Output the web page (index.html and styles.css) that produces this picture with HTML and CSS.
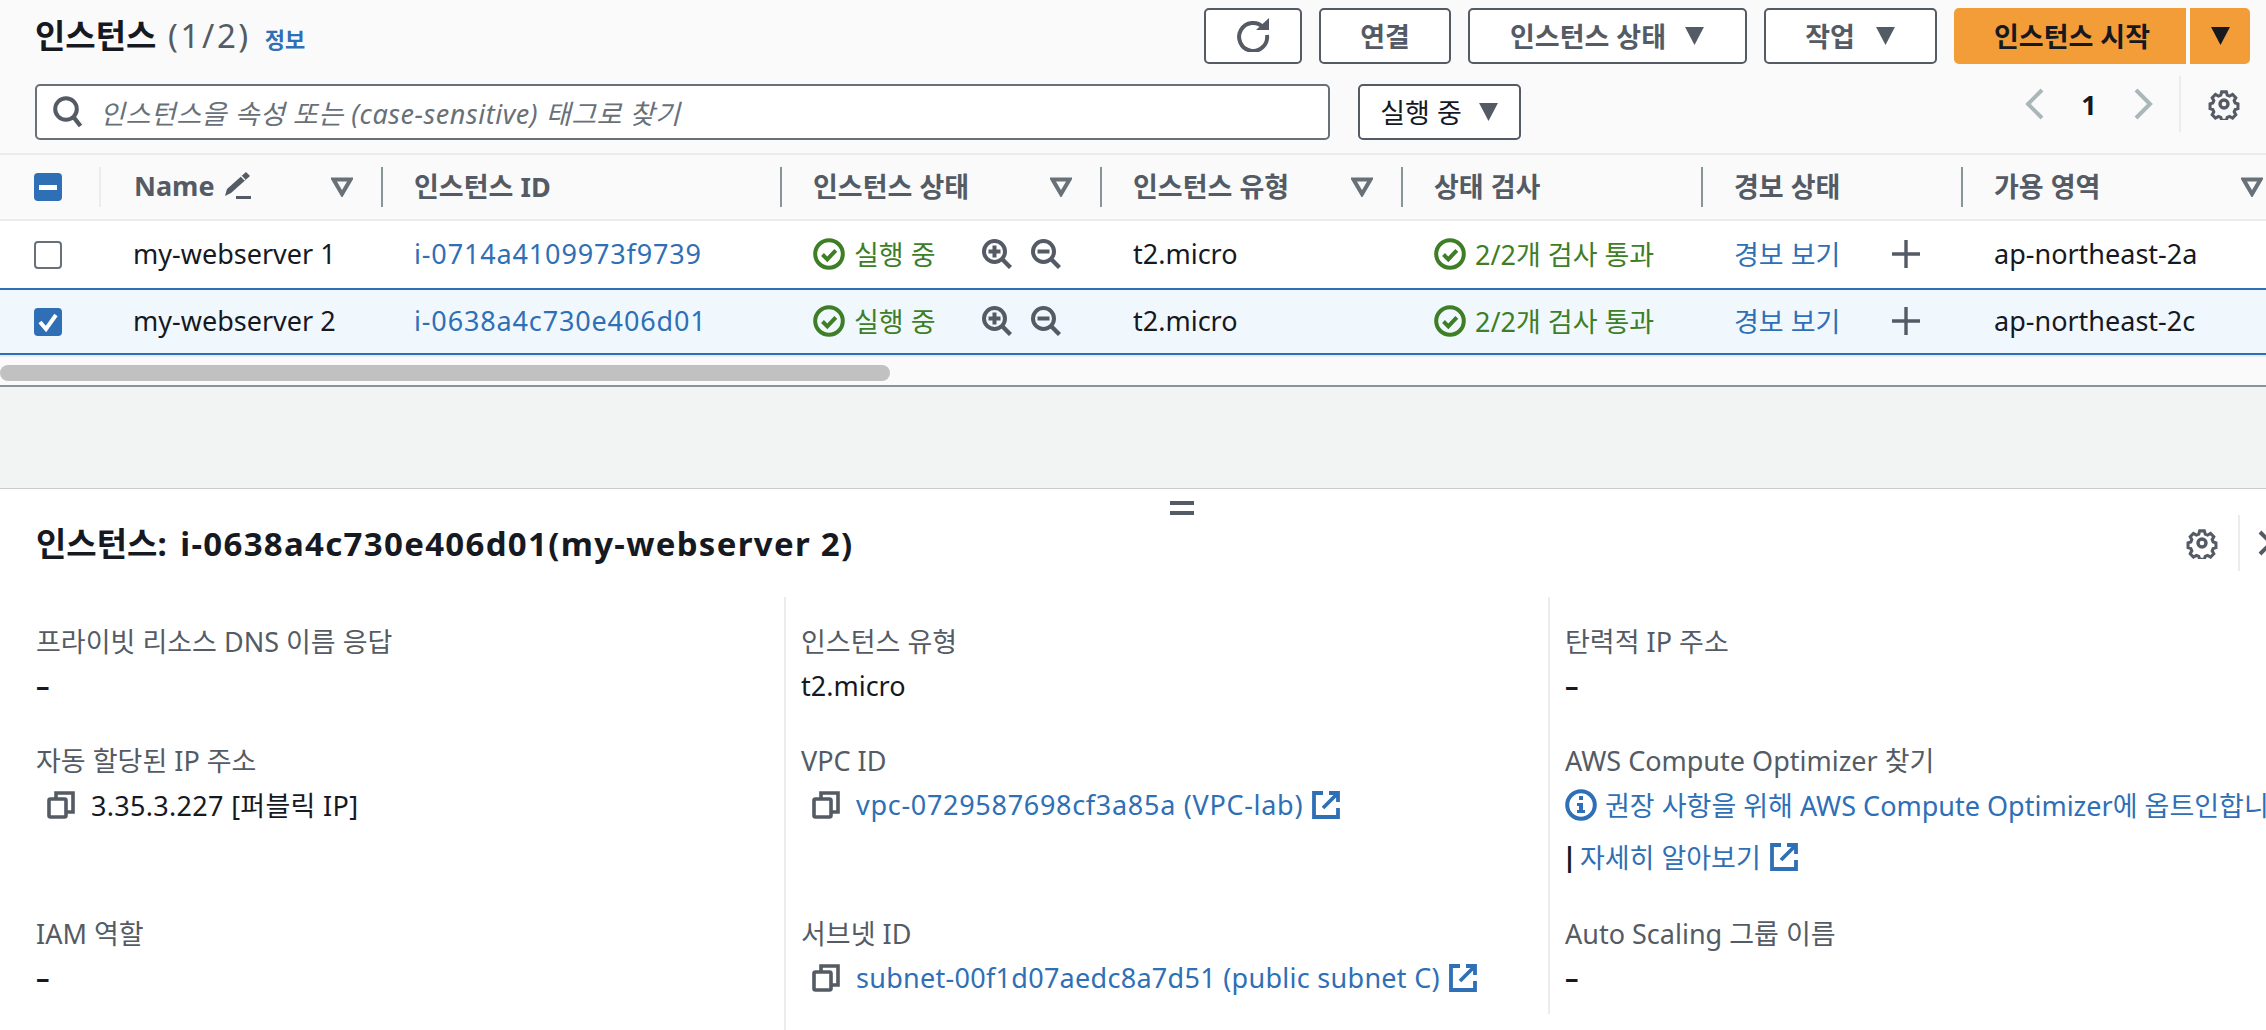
FILE: index.html
```html
<!DOCTYPE html>
<html lang="ko">
<head>
    <meta charset="UTF-8">
    <title>인스턴스</title>
    <link rel="stylesheet" href="styles.css">
</head>
<body>
    <svg class="defs">
        <defs>
            <symbol id="i-caret" viewBox="0 0 20 20"><path d="M1 2h18l-9 17z" fill="currentColor"/></symbol>
            <symbol id="i-filter" viewBox="0 0 22 20"><path d="M2.5 2.5h17L11 17z" fill="none" stroke="currentColor" stroke-width="4" stroke-linejoin="miter"/></symbol>
            <symbol id="i-gear" viewBox="0 0 32 32"><g fill="none" stroke="currentColor" stroke-width="3.4"><circle cx="16" cy="16" r="4"/><path d="M13.4 2.5h5.2l1 3.6 2.6 1.1 3.3-1.8 3.6 3.6-1.8 3.3 1.1 2.6 3.1 1v5.2l-3.1 1-1.1 2.6 1.8 3.3-3.6 3.6-3.3-1.8-2.6 1.1-1 3.1h-5.2l-1-3.1-2.6-1.1-3.3 1.8-3.6-3.6 1.8-3.3-1.1-2.6-3.1-1v-5.2l3.1-1 1.1-2.6-1.8-3.3 3.6-3.6 3.3 1.8 2.6-1.1z" transform="translate(1.6 1.6) scale(.9)"/></g></symbol>
            <symbol id="i-ok" viewBox="0 0 32 32"><circle cx="16" cy="16" r="13.8" fill="none" stroke="currentColor" stroke-width="4"/><path d="M9.5 16.5l4.8 4.8 8.5-9" fill="none" stroke="currentColor" stroke-width="4"/></symbol>
            <symbol id="i-zoom-in" viewBox="0 0 30 30"><circle cx="12.5" cy="12.5" r="10.5" fill="none" stroke="currentColor" stroke-width="4"/><path d="M20 20l8.5 8.5" stroke="currentColor" stroke-width="4.4"/><path d="M12.5 6.5v12M6.5 12.5h12" stroke="currentColor" stroke-width="4"/></symbol>
            <symbol id="i-zoom-out" viewBox="0 0 30 30"><circle cx="12.5" cy="12.5" r="10.5" fill="none" stroke="currentColor" stroke-width="4"/><path d="M20 20l8.5 8.5" stroke="currentColor" stroke-width="4.4"/><path d="M6.5 12.5h12" stroke="currentColor" stroke-width="4"/></symbol>
            <symbol id="i-plus" viewBox="0 0 28 28"><path d="M14 0v28M0 14h28" stroke="currentColor" stroke-width="3.4"/></symbol>
            <symbol id="i-copy" viewBox="0 0 28 28"><path d="M9 7V2h17v19h-6" fill="none" stroke="currentColor" stroke-width="3.6"/><rect x="2" y="8" width="17" height="18" rx="1.5" fill="none" stroke="currentColor" stroke-width="3.6"/></symbol>
            <symbol id="i-ext" viewBox="0 0 28 28"><path d="M11 2H2v24h24v-9" fill="none" stroke="currentColor" stroke-width="3.8"/><path d="M17 2h9v9M25 3L11 17" fill="none" stroke="currentColor" stroke-width="3.8"/></symbol>
        </defs>
    </svg>

    <section class="top-panel">
        <div class="toolbar">
            <div class="title-group">
                <h1 class="title">인스턴스 <span class="count">(1/2)</span></h1>
                <a class="info-link">정보</a>
            </div>
            <div class="actions">
                <button class="btn btn-icon">
                    <svg class="refresh" viewBox="0 0 34 34"><path d="M27.5 9.5A14 14 0 1 0 31 17" fill="none" stroke="currentColor" stroke-width="4"/><path d="M20 12h13V0z" fill="currentColor"/></svg>
                </button>
                <button class="btn btn-connect">연결</button>
                <button class="btn btn-state">인스턴스 상태 <svg class="caret"><use href="#i-caret"/></svg></button>
                <button class="btn btn-action">작업 <svg class="caret"><use href="#i-caret"/></svg></button>
                <div class="split">
                    <button class="btn-primary">인스턴스 시작</button>
                    <button class="btn-primary-caret"><svg class="caret"><use href="#i-caret"/></svg></button>
                </div>
            </div>
        </div>

        <div class="filter-row">
            <div class="search">
                <svg class="search-icon" viewBox="0 0 30 32"><circle cx="13" cy="13" r="10.8" fill="none" stroke="currentColor" stroke-width="4"/><path d="M20.5 21l7 9" stroke="currentColor" stroke-width="4.4"/></svg>
                <span class="placeholder">인스턴스을 속성 또는 (case-sensitive) 태그로 찾기</span>
            </div>
            <button class="btn btn-filter">실행 중 <svg class="caret"><use href="#i-caret"/></svg></button>
            <div class="pager">
                <svg class="chev" viewBox="0 0 20 32"><path d="M17 2L3 16l14 14" fill="none" stroke="currentColor" stroke-width="4"/></svg>
                <span class="page-num">1</span>
                <svg class="chev" viewBox="0 0 20 32"><path d="M3 2l14 14L3 30" fill="none" stroke="currentColor" stroke-width="4"/></svg>
                <span class="pager-gear"><svg class="gear"><use href="#i-gear"/></svg></span>
            </div>
        </div>

        <div class="tbl">
            <div class="tr th-row">
                <div class="cell-check"><span class="check check-mixed"><span class="dash"></span></span></div>
                <div class="th th-first"><span class="th-label">Name<svg class="pencil" viewBox="0 0 28 28"><path d="M23 1l4 4L8 22l-6 3 2-7z" fill="currentColor"/><path d="M13 25h15v3H13z" fill="currentColor"/><path d="M18 5l4 4" stroke="#fafafa" stroke-width="1.5"/></svg></span><svg class="sort"><use href="#i-filter"/></svg></div>
                <div class="th"><span class="th-label">인스턴스 ID</span></div>
                <div class="th"><span class="th-label">인스턴스 상태</span><svg class="sort"><use href="#i-filter"/></svg></div>
                <div class="th"><span class="th-label">인스턴스 유형</span><svg class="sort"><use href="#i-filter"/></svg></div>
                <div class="th"><span class="th-label">상태 검사</span></div>
                <div class="th"><span class="th-label">경보 상태</span></div>
                <div class="th"><span class="th-label">가용 영역</span><svg class="sort"><use href="#i-filter"/></svg></div>
            </div>

            <div class="tr row row-one">
                <div class="cell-check"><span class="check"></span></div>
                <div class="td">my-webserver 1</div>
                <div class="td"><a class="link rid">i-0714a4109973f9739</a></div>
                <div class="td status"><svg class="ok"><use href="#i-ok"/></svg>실행 중<svg class="zoom zoom-first"><use href="#i-zoom-in"/></svg><svg class="zoom"><use href="#i-zoom-out"/></svg></div>
                <div class="td">t2.micro</div>
                <div class="td status"><svg class="ok"><use href="#i-ok"/></svg>2/2개 검사 통과</div>
                <div class="td"><a class="link">경보 보기</a><svg class="plus"><use href="#i-plus"/></svg></div>
                <div class="td">ap-northeast-2a</div>
            </div>

            <div class="tr row row-selected">
                <div class="cell-check"><span class="check check-on"><svg viewBox="0 0 28 28"><path d="M6 14l6 7 10-14" fill="none" stroke="#fff" stroke-width="4"/></svg></span></div>
                <div class="td">my-webserver 2</div>
                <div class="td"><a class="link rid">i-0638a4c730e406d01</a></div>
                <div class="td status"><svg class="ok"><use href="#i-ok"/></svg>실행 중<svg class="zoom zoom-first"><use href="#i-zoom-in"/></svg><svg class="zoom"><use href="#i-zoom-out"/></svg></div>
                <div class="td">t2.micro</div>
                <div class="td status"><svg class="ok"><use href="#i-ok"/></svg>2/2개 검사 통과</div>
                <div class="td"><a class="link">경보 보기</a><svg class="plus"><use href="#i-plus"/></svg></div>
                <div class="td">ap-northeast-2c</div>
            </div>
        </div>

        <div class="scroll-track"><div class="scroll-thumb"></div></div>
    </section>

    <div class="gap-area"></div>

    <section class="detail">
        <div class="drag-handle"></div>
        <div class="detail-head">
            <h2 class="detail-title">인스턴스: <span class="title-id">i-0638a4c730e406d01(my-webserver 2)</span></h2>
            <div class="detail-tools">
                <svg class="gear gear-small"><use href="#i-gear"/></svg>
                <span class="close-wrap"><svg class="close" viewBox="0 0 28 28"><path d="M3 3l22 22M25 3L3 25" stroke="currentColor" stroke-width="4"/></svg></span>
            </div>
        </div>

        <div class="detail-grid">
            <div class="col col-first">
                <div class="item"><div class="label">프라이빗 리소스 DNS 이름 응답</div><div class="value dash-value">–</div></div>
                <div class="item"><div class="label">자동 할당된 IP 주소</div><div class="value copy-line"><svg class="copy"><use href="#i-copy"/></svg><span class="ip">3.35.3.227 [퍼블릭 IP]</span></div></div>
                <div class="item"><div class="label">IAM 역할</div><div class="value dash-value">–</div></div>
            </div>
            <div class="col">
                <div class="item"><div class="label">인스턴스 유형</div><div class="value">t2.micro</div></div>
                <div class="item"><div class="label">VPC ID</div><div class="value copy-line"><svg class="copy"><use href="#i-copy"/></svg><a class="link vpc">vpc-0729587698cf3a85a (VPC-lab)</a><svg class="ext"><use href="#i-ext"/></svg></div></div>
                <div class="item"><div class="label">서브넷 ID</div><div class="value copy-line"><svg class="copy"><use href="#i-copy"/></svg><a class="link subnet">subnet-00f1d07aedc8a7d51 (public subnet C)</a><svg class="ext"><use href="#i-ext"/></svg></div></div>
            </div>
            <div class="col col-last">
                <div class="item"><div class="label">탄력적 IP 주소</div><div class="value dash-value">–</div></div>
                <div class="item">
                    <div class="label">AWS Compute Optimizer 찾기</div>
                    <div class="value nowrap"><svg class="info" viewBox="0 0 32 32"><circle cx="16" cy="16" r="13.8" fill="none" stroke="currentColor" stroke-width="4"/><path d="M14 7h4v4h-4zM12 14h6v7h2v3h-8v-3h2v-4h-2z" fill="currentColor"/></svg><a class="link">권장 사항을 위해 AWS Compute Optimizer에 옵트인합니다.</a></div>
                    <div class="value more"><span class="bar">|</span><a class="link">자세히 알아보기</a><svg class="ext"><use href="#i-ext"/></svg></div>
                </div>
                <div class="item"><div class="label">Auto Scaling 그룹 이름</div><div class="value dash-value">–</div></div>
            </div>
        </div>
    </section>
</body>
</html>
```

FILE: styles.css
```css
* {
    box-sizing: border-box;
    margin: 0;
    padding: 0;
}

html, body {
    height: 1030px;
    overflow: hidden;
}

body {
    font-family: "Noto Sans", "Noto Sans CJK KR", sans-serif;
    font-size: 27px;
    color: #16191f;
    background-color: #fff;
}

.defs {
    display: none;
}

button {
    font-family: inherit;
}

.top-panel {
    background-color: #fafafa;
}

/* toolbar */
.toolbar {
    display: flex;
    justify-content: space-between;
    height: 84px;
    padding: 8px 16px 0 35px;
}

.title-group {
    display: flex;
    align-items: baseline;
    padding-top: 6px;
}

.title {
    font-size: 33px;
    font-weight: 700;
    line-height: 44px;
}

.count {
    margin-left: 3px;
    font-weight: 400;
    letter-spacing: 2.6px;
    color: #545b64;
}

.info-link {
    margin-left: 14px;
    font-size: 22px;
    font-weight: 700;
    color: #2f6fb5;
}

.actions {
    display: flex;
    gap: 17px;
}

.btn {
    display: flex;
    align-items: center;
    justify-content: center;
    height: 56px;
    padding-bottom: 2px;
    border: 2px solid #545b64;
    border-radius: 5px;
    background-color: #fff;
    color: #545b64;
    font-size: 27px;
    font-weight: 700;
}

.btn-icon { width: 98px; }
.btn-connect { width: 132px; }
.btn-state { width: 279px; gap: 18px; }
.btn-action { width: 173px; gap: 20px; }

.refresh {
    width: 34px;
    height: 34px;
}

.caret {
    width: 21px;
    height: 21px;
}

.split {
    display: flex;
    gap: 4px;
    margin-left: 0;
}

.btn-primary, .btn-primary-caret {
    height: 56px;
    padding-bottom: 2px;
    border: none;
    background-color: #f29d38;
    color: #16191f;
    font-size: 27px;
    font-weight: 700;
}

.btn-primary {
    width: 232px;
    padding-left: 4px;
    border-radius: 5px 0 0 5px;
}

.btn-primary-caret {
    display: flex;
    align-items: center;
    justify-content: center;
    width: 60px;
    border-radius: 0 5px 5px 0;
}

/* search row */
.filter-row {
    display: flex;
    height: 69px;
    padding-left: 35px;
}

.search {
    display: flex;
    align-items: center;
    width: 1295px;
    height: 56px;
    padding-left: 16px;
    border: 2px solid #687078;
    border-radius: 5px;
    background-color: #fff;
}

.search-icon {
    width: 30px;
    height: 32px;
    color: #545b64;
}

.placeholder {
    margin-left: 17px;
    font-style: italic;
    letter-spacing: .55px;
    color: #687078;
}

.btn-filter {
    width: 163px;
    margin-left: 28px;
    gap: 16px;
    color: #16191f;
    font-weight: 400;
}

.btn-filter .caret {
    color: #545b64;
}

.pager {
    display: flex;
    align-items: center;
    height: 56px;
    margin-top: -8px;
    margin-left: auto;
    color: #aab7b8;
}

.chev {
    width: 20px;
    height: 32px;
}

.page-num {
    width: 88px;
    text-align: center;
    font-weight: 700;
    color: #16191f;
}

.pager-gear {
    display: flex;
    align-items: center;
    justify-content: center;
    height: 56px;
    margin-left: 26px;
    padding: 0 26px 0 27px;
    border-left: 2px solid #eaeded;
    color: #545b64;
}

.gear {
    width: 32px;
    height: 32px;
}

/* table */
.tbl {
    overflow: hidden;
    border-top: 2px solid #eaeded;
}

.tr {
    display: grid;
    grid-template-columns: 100px 281px 399px 320px 301px 300px 260px 330px;
    align-items: center;
    width: 2291px;
}

.th-row {
    height: 66px;
    border-bottom: 2px solid #eaeded;
}

.row {
    background-color: #fff;
}

.row-one {
    height: 67px;
}

.row-selected {
    height: 67px;
    border-top: 2px solid #2f6fb5;
    border-bottom: 2px solid #2f6fb5;
    background-color: #f1f8fd;
}

.cell-check {
    padding-left: 34px;
}

.check {
    display: flex;
    align-items: center;
    justify-content: center;
    width: 28px;
    height: 28px;
    border: 2px solid #687078;
    border-radius: 4px;
    background-color: #fff;
}

.check-mixed, .check-on {
    border: none;
    background-color: #2f6fb5;
}

.dash {
    width: 18px;
    height: 5px;
    background-color: #fff;
}

.th {
    display: flex;
    align-items: center;
    justify-content: space-between;
    height: 40px;
    padding: 0 28px 0 31px;
    border-left: 2px solid #879596;
    color: #545b64;
    font-weight: 700;
}

.th-first {
    padding-left: 34px;
    border-left: none;
    position: relative;
}

.th-first::before {
    content: "";
    position: absolute;
    left: -1px;
    top: 0;
    bottom: 0;
    width: 2px;
    background-color: #eaeded;
}

.th-label {
    display: flex;
    align-items: center;
    padding-bottom: 4px;
    white-space: pre;
}

.pencil {
    width: 28px;
    height: 28px;
    margin-left: 8px;
}

.sort {
    flex: none;
    width: 22px;
    height: 20px;
    color: #687078;
}

.td {
    display: flex;
    align-items: center;
    padding-left: 33px;
    padding-bottom: 2px;
    white-space: nowrap;
}

.link {
    color: #2f6fb5;
}

.rid {
    letter-spacing: .85px;
}

.status {
    color: #3d7e26;
}

.ok {
    flex: none;
    width: 32px;
    height: 32px;
    margin-right: 9px;
}

.zoom {
    flex: none;
    width: 30px;
    height: 30px;
    margin-left: 19px;
    color: #545b64;
}

.zoom-first {
    margin-left: 46px;
}

.plus {
    width: 28px;
    height: 28px;
    margin-left: 52px;
    color: #545b64;
}

.scroll-track {
    height: 30px;
    margin-bottom: 0;
    padding-top: 8px;
    border-top: 2px solid #eaeded;
    border-bottom: 0;
}

.scroll-thumb {
    width: 890px;
    height: 16px;
    border-radius: 8px;
    background-color: #c1c1c1;
}

.gap-area {
    height: 103px;
    border-top: 2px solid #879596;
    background-color: #f2f3f3;
}

/* split panel */
.detail {
    position: relative;
    height: 543px;
    border-top: 1px solid #c9cccc;
}

.drag-handle {
    position: absolute;
    left: 1170px;
    top: 12px;
    width: 24px;
    height: 14px;
    border-top: 4px solid #545b64;
    border-bottom: 4px solid #545b64;
}

.detail-head {
    display: flex;
    align-items: center;
    justify-content: space-between;
    height: 108px;
    padding-left: 36px;
}

.detail-title {
    padding-bottom: 2px;
    font-size: 33px;
    font-weight: 700;
}

.title-id {
    margin-left: 5px;
    letter-spacing: 1.3px;
}

.detail-tools {
    display: flex;
    align-items: center;
    color: #545b64;
}

.gear-small {
    margin-right: 20px;
}

.close-wrap {
    display: flex;
    align-items: center;
    width: 28px;
    height: 56px;
    padding-left: 17px;
    border-left: 2px solid #eaeded;
}

.close {
    flex: none;
    width: 28px;
    height: 28px;
}

.detail-grid {
    display: grid;
    grid-template-columns: 784px 764px 718px;
    height: 434px;
}

.col {
    display: grid;
    grid-template-rows: 119px 173px auto;
    padding: 22px 0 0 15px;
    border-left: 2px solid #eaeded;
    overflow: hidden;
}

.col-first {
    padding-left: 36px;
    border-left: none;
}

.col-last {
    height: 417px;
}

.label {
    height: 45px;
    line-height: 45px;
    color: #545b64;
    white-space: nowrap;
}

.value {
    display: flex;
    align-items: center;
    height: 45px;
    padding-bottom: 2px;
    white-space: nowrap;
}

.dash-value {
    font-weight: 700;
}

.copy-line {
    padding-left: 11px;
}

.ip {
    letter-spacing: .3px;
}

.vpc {
    letter-spacing: .7px;
}

.subnet {
    letter-spacing: .28px;
}

.copy {
    flex: none;
    width: 28px;
    height: 28px;
    margin-right: 16px;
    color: #545b64;
}

.ext {
    flex: none;
    width: 28px;
    height: 28px;
    margin-left: 9px;
    color: #2f6fb5;
}

.info {
    flex: none;
    width: 32px;
    height: 32px;
    margin-right: 8px;
    color: #2f6fb5;
}

.more {
    margin-top: 7px;
}

.bar {
    margin: 0 3px 0 -3px;
    font-weight: 700;
}
```
